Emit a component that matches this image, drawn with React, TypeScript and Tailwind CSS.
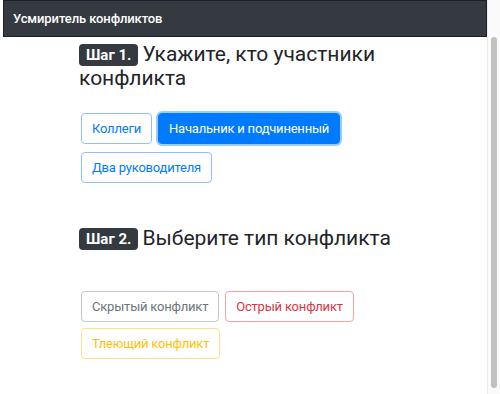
import React from "react";

const outline = "inline-block rounded-[4px] border bg-white px-[10px] py-[4px] text-[13px] tracking-[-0.2px] leading-[21px]";
const badge = "mr-[4px] inline-block rounded-[4px] bg-[#343a40] px-[7px] py-[3px] align-[1px] text-[15px] font-bold leading-[16px] text-white";

export default function App() {
  return (
    <div
      className="flex h-[394px] w-[500px] overflow-hidden bg-white text-[#212529]"
      style={{ fontFamily: "Roboto, 'Liberation Sans', sans-serif" }}
    >
      <div className="flex w-[487px] flex-col">
        <div className="ml-[3px] flex h-[37px] items-center border border-[#1d2124] bg-[#343a40] pl-[9px] text-[13px] font-medium tracking-[-0.1px] text-white">
          Усмиритель конфликтов
        </div>
        <div className="pl-[79px]">
          <h5 className="mt-[5px] w-[330px] text-[21px] font-normal leading-[24px]">
            <span className={badge}>Шаг 1.</span>
            Укажите, кто участники конфликта
          </h5>
          <div className="ml-[2px] mt-[23px] flex w-[330px] flex-wrap gap-x-[6px] gap-y-[8px]">
            <button className={`${outline} border-[#8fbfff] text-[#007bff]`}>Коллеги</button>
            <button className="inline-block rounded-[4px] border border-[#007bff] bg-[#007bff] px-[10px] py-[4px] text-[13px] leading-[21px] tracking-[-0.2px] text-white shadow-[0_0_0_2px_rgba(38,143,255,0.45)]">
              Начальник и подчиненный
            </button>
            <button className={`${outline} border-[#8fbfff] text-[#007bff]`}>Два руководителя</button>
          </div>
          <h5 className="mt-[43px] w-[330px] text-[21px] font-normal leading-[24px]">
            <span className={badge}>Шаг 2.</span>
            Выберите тип конфликта
          </h5>
          <div className="ml-[2px] mt-[41px] flex w-[330px] flex-wrap gap-x-[6px] gap-y-[6px]">
            <button className={`${outline} border-[#c2c6cb] text-[#6c757d]`}>Скрытый конфликт</button>
            <button className={`${outline} border-[#f0a4ab] text-[#dc3545]`}>Острый конфликт</button>
            <button className={`${outline} border-[#ffe08c] text-[#ffc107]`}>Тлеющий конфликт</button>
          </div>
        </div>
      </div>
      <div className="flex w-[13px] justify-center border-l border-[#ededed] bg-[#fafafa] pt-[37px] pb-[6px]">
        <div className="w-[6px] rounded-full bg-[#c1c1c1]" />
      </div>
    </div>
  );
}
